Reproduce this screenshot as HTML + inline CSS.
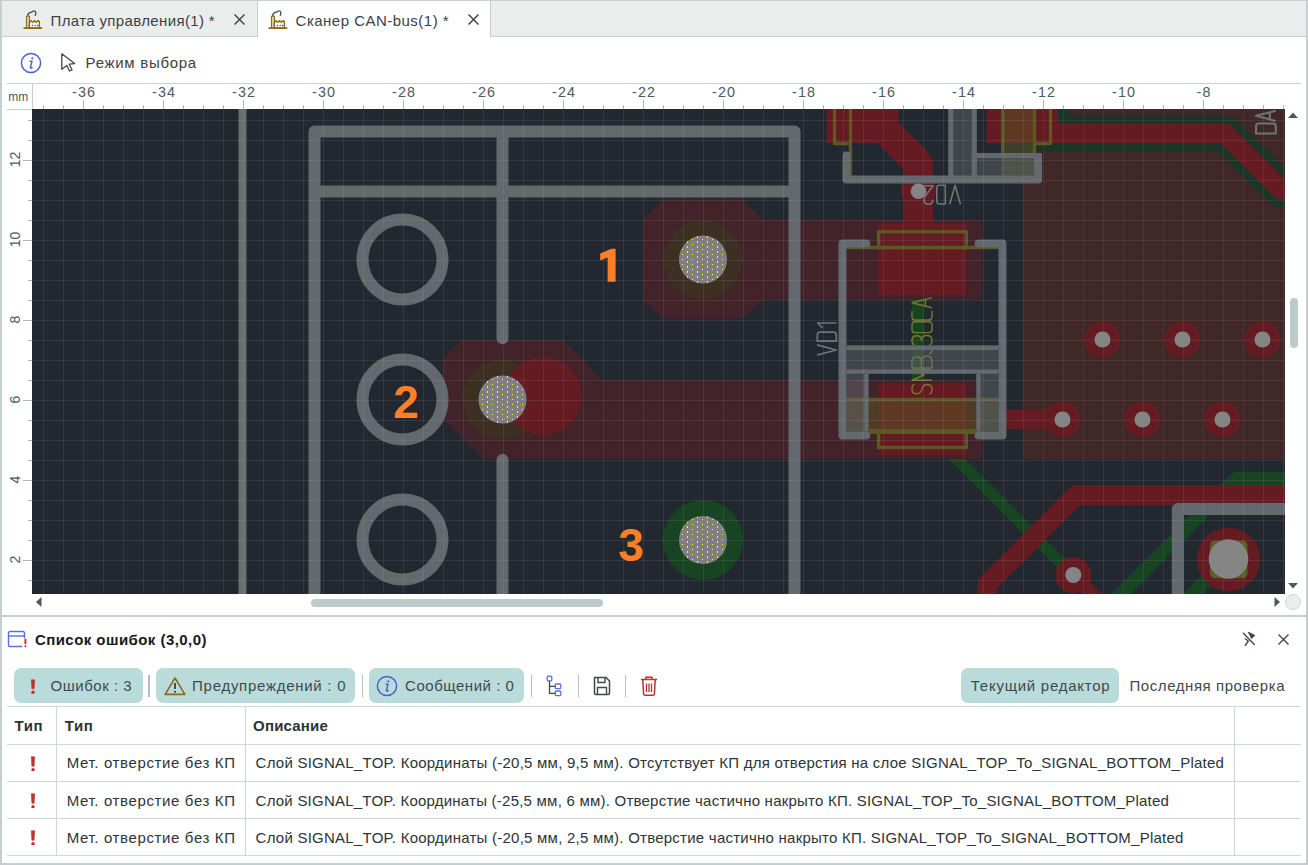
<!DOCTYPE html>
<html><head><meta charset="utf-8">
<style>
*{box-sizing:border-box;margin:0;padding:0}
html,body{width:1308px;height:865px;overflow:hidden;background:#c4cfcf;font-family:"Liberation Sans",sans-serif;color:#343c3e}
svg{display:block}
.abs{position:absolute}
.t{position:absolute;white-space:nowrap;line-height:1}
</style></head><body>
<div class="abs" style="left:2px;top:1px;width:1304px;height:35px;background:#ebeded"></div>
<div class="abs" style="left:2px;top:36px;width:1304px;height:1px;background:#c4cfcf"></div>
<div class="abs" style="left:257px;top:1px;width:1px;height:36px;background:#c4cfcf"></div>
<div class="abs" style="left:258px;top:1px;width:232px;height:36px;background:#fff"></div>
<div class="abs" style="left:490px;top:1px;width:1px;height:36px;background:#c4cfcf"></div>
<div class="abs" style="left:2px;top:37px;width:1304px;height:578px;background:#fff"></div>
<div class="abs" style="left:2px;top:617px;width:1304px;height:246px;background:#fff"></div>
<svg class="abs" style="left:23px;top:10px" width="20" height="20" viewBox="0 0 20 20"><path d="M3.6,18 V6.8 Q3.6,6 4.4,6 H5.5 Q6.3,6 6.3,6.8 V18" stroke="#8e6a14" stroke-width="1.4" fill="#fff"/><path d="M6.3,18 V12.8 L8.2,10.6 L9.8,12.4 L11.7,10.6 L13.3,12.4 L15.2,10.6 L16.4,11.6 V18 Z" stroke="#8e6a14" stroke-width="1.4" fill="#fff" stroke-linejoin="round"/><path d="M1.2,18.2 H18.6" stroke="#8e6a14" stroke-width="1.7" stroke-linecap="round"/><circle cx="9.4" cy="15.4" r="0.75" fill="#3c4a4a"/><circle cx="12.1" cy="15.4" r="0.75" fill="#3c4a4a"/><circle cx="14.7" cy="15.4" r="0.75" fill="#3c4a4a"/><path d="M4.7,4.9 Q6.2,1.9 8.8,2.1 Q10,0.4 11.8,1 Q13.6,1.9 12.3,5.3" stroke="#3c4a4a" stroke-width="1.3" fill="none" stroke-linecap="round"/></svg>
<svg class="abs" style="left:268px;top:10px" width="20" height="20" viewBox="0 0 20 20"><path d="M3.6,18 V6.8 Q3.6,6 4.4,6 H5.5 Q6.3,6 6.3,6.8 V18" stroke="#8e6a14" stroke-width="1.4" fill="#fff"/><path d="M6.3,18 V12.8 L8.2,10.6 L9.8,12.4 L11.7,10.6 L13.3,12.4 L15.2,10.6 L16.4,11.6 V18 Z" stroke="#8e6a14" stroke-width="1.4" fill="#fff" stroke-linejoin="round"/><path d="M1.2,18.2 H18.6" stroke="#8e6a14" stroke-width="1.7" stroke-linecap="round"/><circle cx="9.4" cy="15.4" r="0.75" fill="#3c4a4a"/><circle cx="12.1" cy="15.4" r="0.75" fill="#3c4a4a"/><circle cx="14.7" cy="15.4" r="0.75" fill="#3c4a4a"/><path d="M4.7,4.9 Q6.2,1.9 8.8,2.1 Q10,0.4 11.8,1 Q13.6,1.9 12.3,5.3" stroke="#3c4a4a" stroke-width="1.3" fill="none" stroke-linecap="round"/></svg>
<svg class="abs" style="left:234px;top:14px" width="11" height="11" viewBox="0 0 11 11"><path d="M0.5,0.5 L10.5,10.5 M10.5,0.5 L0.5,10.5" stroke="#3c4a4a" stroke-width="1.5"/></svg>
<svg class="abs" style="left:468px;top:14px" width="11" height="11" viewBox="0 0 11 11"><path d="M0.5,0.5 L10.5,10.5 M10.5,0.5 L0.5,10.5" stroke="#3c4a4a" stroke-width="1.5"/></svg>
<svg class="abs" style="left:20px;top:52px" width="22" height="22" viewBox="0 0 22 22"><circle cx="11" cy="11" r="9.6" stroke="#4a5fd0" stroke-width="1.5" fill="none"/><circle cx="12.3" cy="6.3" r="1.1" fill="#4a5fd0"/><path d="M9.6,9.3 H12 L10.4,15.3 Q10.2,16.2 11.2,16 L12.6,15.5" stroke="#4a5fd0" stroke-width="1.4" fill="none" stroke-linejoin="round"/></svg>
<svg class="abs" style="left:60px;top:52px" width="18" height="22" viewBox="0 0 18 22"><path d="M1.8,1.8 L14.6,11.6 L9.3,12.2 L12,17.8 L9.5,19 L6.9,13.4 L1.8,17.3 Z" stroke="#3c4a4a" stroke-width="1.3" fill="#fff" stroke-linejoin="round"/></svg>
<svg class="abs" style="left:0;top:0" width="1308" height="110" viewBox="0 0 1308 110">
<path d="M7,83.5 H1301 M7,109.5 H32 M32.5,83 V109" stroke="#c4cfcf" stroke-width="1"/>
<path d="M43.5,105V109M63.5,105V109M83.5,100V109M103.5,105V109M123.5,105V109M143.5,105V109M163.5,100V109M183.5,105V109M203.5,105V109M223.5,105V109M243.5,100V109M263.5,105V109M283.5,105V109M303.5,105V109M323.5,100V109M343.5,105V109M363.5,105V109M383.5,105V109M403.5,100V109M423.5,105V109M443.5,105V109M463.5,105V109M483.5,100V109M503.5,105V109M523.5,105V109M543.5,105V109M563.5,100V109M583.5,105V109M603.5,105V109M623.5,105V109M643.5,100V109M663.5,105V109M683.5,105V109M703.5,105V109M723.5,100V109M743.5,105V109M763.5,105V109M783.5,105V109M803.5,100V109M823.5,105V109M843.5,105V109M863.5,105V109M883.5,100V109M903.5,105V109M923.5,105V109M943.5,105V109M963.5,100V109M983.5,105V109M1003.5,105V109M1023.5,105V109M1043.5,100V109M1063.5,105V109M1083.5,105V109M1103.5,105V109M1123.5,100V109M1143.5,105V109M1163.5,105V109M1183.5,105V109M1203.5,100V109M1223.5,105V109M1243.5,105V109M1263.5,105V109M1283.5,105V109" stroke="#a9b8b8" stroke-width="1"/>
<text x="84.0" y="97" text-anchor="middle" font-family="Liberation Sans" font-size="14.3" letter-spacing="1.1" fill="#4b5a5e">-36</text>
<text x="164.0" y="97" text-anchor="middle" font-family="Liberation Sans" font-size="14.3" letter-spacing="1.1" fill="#4b5a5e">-34</text>
<text x="244.0" y="97" text-anchor="middle" font-family="Liberation Sans" font-size="14.3" letter-spacing="1.1" fill="#4b5a5e">-32</text>
<text x="324.0" y="97" text-anchor="middle" font-family="Liberation Sans" font-size="14.3" letter-spacing="1.1" fill="#4b5a5e">-30</text>
<text x="404.0" y="97" text-anchor="middle" font-family="Liberation Sans" font-size="14.3" letter-spacing="1.1" fill="#4b5a5e">-28</text>
<text x="484.0" y="97" text-anchor="middle" font-family="Liberation Sans" font-size="14.3" letter-spacing="1.1" fill="#4b5a5e">-26</text>
<text x="564.0" y="97" text-anchor="middle" font-family="Liberation Sans" font-size="14.3" letter-spacing="1.1" fill="#4b5a5e">-24</text>
<text x="644.0" y="97" text-anchor="middle" font-family="Liberation Sans" font-size="14.3" letter-spacing="1.1" fill="#4b5a5e">-22</text>
<text x="724.0" y="97" text-anchor="middle" font-family="Liberation Sans" font-size="14.3" letter-spacing="1.1" fill="#4b5a5e">-20</text>
<text x="804.0" y="97" text-anchor="middle" font-family="Liberation Sans" font-size="14.3" letter-spacing="1.1" fill="#4b5a5e">-18</text>
<text x="884.0" y="97" text-anchor="middle" font-family="Liberation Sans" font-size="14.3" letter-spacing="1.1" fill="#4b5a5e">-16</text>
<text x="964.0" y="97" text-anchor="middle" font-family="Liberation Sans" font-size="14.3" letter-spacing="1.1" fill="#4b5a5e">-14</text>
<text x="1044.0" y="97" text-anchor="middle" font-family="Liberation Sans" font-size="14.3" letter-spacing="1.1" fill="#4b5a5e">-12</text>
<text x="1124.0" y="97" text-anchor="middle" font-family="Liberation Sans" font-size="14.3" letter-spacing="1.1" fill="#4b5a5e">-10</text>
<text x="1204.0" y="97" text-anchor="middle" font-family="Liberation Sans" font-size="14.3" letter-spacing="1.1" fill="#4b5a5e">-8</text>
</svg>
<svg class="abs" style="left:0;top:109px" width="32" height="485" viewBox="0 109 32 485">
<path d="M28,120.5H32M28,140.5H32M23,160.5H32M28,180.5H32M28,200.5H32M28,220.5H32M23,240.5H32M28,260.5H32M28,280.5H32M28,300.5H32M23,320.5H32M28,340.5H32M28,360.5H32M28,380.5H32M23,400.5H32M28,420.5H32M28,440.5H32M28,460.5H32M23,480.5H32M28,500.5H32M28,520.5H32M28,540.5H32M23,560.5H32M28,580.5H32" stroke="#a9b8b8" stroke-width="1"/>
<text transform="translate(20.3,159.5) rotate(-90)" x="0" y="0" text-anchor="middle" font-family="Liberation Sans" font-size="14" fill="#4b5a5e">12</text>
<text transform="translate(20.3,239.5) rotate(-90)" x="0" y="0" text-anchor="middle" font-family="Liberation Sans" font-size="14" fill="#4b5a5e">10</text>
<text transform="translate(20.3,319.5) rotate(-90)" x="0" y="0" text-anchor="middle" font-family="Liberation Sans" font-size="14" fill="#4b5a5e">8</text>
<text transform="translate(20.3,399.5) rotate(-90)" x="0" y="0" text-anchor="middle" font-family="Liberation Sans" font-size="14" fill="#4b5a5e">6</text>
<text transform="translate(20.3,479.5) rotate(-90)" x="0" y="0" text-anchor="middle" font-family="Liberation Sans" font-size="14" fill="#4b5a5e">4</text>
<text transform="translate(20.3,559.5) rotate(-90)" x="0" y="0" text-anchor="middle" font-family="Liberation Sans" font-size="14" fill="#4b5a5e">2</text>
</svg>
<div class="abs" style="left:1288px;top:112px;width:10px;height:6px"><svg width="10" height="6" viewBox="0 0 10 6"><path d="M0,6 L5,0.5 L10,6 Z" fill="#4e5a5a"/></svg></div>
<div class="abs" style="left:1287.5px;top:583px;width:10px;height:6px"><svg width="10" height="6" viewBox="0 0 10 6"><path d="M0,0 L5,5.5 L10,0 Z" fill="#4e5a5a"/></svg></div>
<div class="abs" style="left:1290px;top:298px;width:8px;height:50px;border-radius:4px;background:#bccaca"></div>
<div class="abs" style="left:311px;top:599px;width:292px;height:8px;border-radius:4px;background:#bccaca"></div>
<div class="abs" style="left:36px;top:597px;width:6px;height:10px"><svg width="6" height="10" viewBox="0 0 6 10"><path d="M5.5,0 L0,5 L5.5,10 Z" fill="#4e5a5a"/></svg></div>
<div class="abs" style="left:1274px;top:597px;width:6px;height:10px"><svg width="6" height="10" viewBox="0 0 6 10"><path d="M0.5,0 L6,5 L0.5,10 Z" fill="#4e5a5a"/></svg></div>
<div class="abs" style="left:1285px;top:594px;width:16px;height:16px;border-radius:50%;background:#eaeded;border:1px solid #cfd8d8"></div>
<svg class="abs" style="left:7px;top:630px" width="22" height="18" viewBox="0 0 22 18"><path d="M17.5,8 V3 Q17.5,1.5 16,1.5 H3 Q1.5,1.5 1.5,3 V15 Q1.5,16.5 3,16.5 H15" stroke="#5b6ee0" stroke-width="1.4" fill="none"/><path d="M1.5,6 H17.5" stroke="#5b6ee0" stroke-width="1.4"/><path d="M18.4,8.6 V14.2" stroke="#c0302f" stroke-width="1.9"/><circle cx="18.4" cy="16.3" r="1.05" fill="#c0302f"/></svg>
<svg class="abs" style="left:1241px;top:631px" width="17" height="17" viewBox="0 0 17 17"><path d="M7.4,1.2 L13.8,4.5 L10.6,7.4 Z" fill="#3c4a4a" stroke="#3c4a4a" stroke-width="1" stroke-linejoin="round"/><path d="M2.4,2.2 L13.3,13.5" stroke="#3c4a4a" stroke-width="1.4" stroke-linecap="round"/><path d="M4.3,7.8 L7.5,10.2 M7.2,10.2 L4.3,14.5" stroke="#3c4a4a" stroke-width="1.4" stroke-linecap="round"/></svg>
<svg class="abs" style="left:1278px;top:634px" width="11" height="11" viewBox="0 0 11 11"><path d="M0.5,0.5 L10.5,10.5 M10.5,0.5 L0.5,10.5" stroke="#3c4a4a" stroke-width="1.4"/></svg>
<div class="abs" style="left:14px;top:668px;width:128.5px;height:34.5px;border-radius:7px;background:#b9dcdb"></div>
<div class="abs" style="left:155.5px;top:668px;width:199.5px;height:34.5px;border-radius:7px;background:#b9dcdb"></div>
<div class="abs" style="left:369px;top:668px;width:155px;height:34.5px;border-radius:7px;background:#b9dcdb"></div>
<div class="abs" style="left:961px;top:668px;width:158px;height:34.5px;border-radius:7px;background:#b9dcdb"></div>
<div class="abs" style="left:148px;top:674.5px;width:1.6px;height:22px;background:#b4c0c0"></div>
<div class="abs" style="left:361.5px;top:674.5px;width:1.6px;height:22px;background:#b4c0c0"></div>
<div class="abs" style="left:530.5px;top:674.5px;width:1.6px;height:22px;background:#b4c0c0"></div>
<div class="abs" style="left:577.5px;top:674.5px;width:1.6px;height:22px;background:#b4c0c0"></div>
<div class="abs" style="left:624.5px;top:674.5px;width:1.6px;height:22px;background:#b4c0c0"></div>
<svg class="abs" style="left:30.2px;top:678.5px" width="6" height="15" viewBox="0 0 6 15"><path d="M1.3,0.8 H4.7 L4.1,9.8 H1.9 Z" fill="#c0302f" stroke="#c0302f" stroke-width="0.6" stroke-linejoin="round"/><circle cx="3" cy="13.2" r="1.7" fill="#c0302f"/></svg>
<svg class="abs" style="left:163px;top:676px" width="24" height="20" viewBox="0 0 24 20"><path d="M12,2 L21.9,18.4 H2.1 Z" stroke="#8c6a1a" stroke-width="1.6" fill="none" stroke-linejoin="round"/><path d="M12,7 V13" stroke="#2b3436" stroke-width="1.7"/><circle cx="12" cy="15.8" r="1" fill="#2b3436"/></svg>
<svg class="abs" style="left:376px;top:675px" width="22" height="22" viewBox="0 0 22 22"><circle cx="11" cy="11" r="9.6" stroke="#4a5fd0" stroke-width="1.5" fill="none"/><circle cx="12.3" cy="6.3" r="1.1" fill="#4a5fd0"/><path d="M9.6,9.3 H12 L10.4,15.3 Q10.2,16.2 11.2,16 L12.6,15.5" stroke="#4a5fd0" stroke-width="1.4" fill="none" stroke-linejoin="round"/></svg>
<svg class="abs" style="left:546px;top:675px" width="20" height="22" viewBox="0 0 20 22"><rect x="1.2" y="1.2" width="4.6" height="4.6" rx="1" stroke="#5b6ee0" stroke-width="1.3" fill="none"/><rect x="9.2" y="9" width="5.6" height="4.6" rx="1" stroke="#5b6ee0" stroke-width="1.3" fill="none"/><rect x="9.2" y="16" width="5.6" height="4.6" rx="1" stroke="#5b6ee0" stroke-width="1.3" fill="none"/><path d="M3.5,6 V18.3 H9.2 M3.5,11.3 H9.2" stroke="#3c4a4a" stroke-width="1.3" fill="none"/></svg>
<svg class="abs" style="left:592px;top:675px" width="20" height="22" viewBox="0 0 20 22"><path d="M2.5,2.5 H14 L17.5,6 V18 Q17.5,19.5 16,19.5 H4 Q2.5,19.5 2.5,18 Z" stroke="#3c4a4a" stroke-width="1.5" fill="none" stroke-linejoin="round"/><path d="M6,2.8 V7.5 H13 V2.8 M5.5,19.2 V12.5 H14.5 V19.2" stroke="#3c4a4a" stroke-width="1.4" fill="none"/></svg>
<svg class="abs" style="left:639px;top:675px" width="20" height="22" viewBox="0 0 20 22"><path d="M2,4.5 H18 M7,4.3 V2.3 H13 V4.3" stroke="#c0302f" stroke-width="1.5" fill="none"/><path d="M3.8,5 L4.6,19 Q4.7,20.3 6,20.3 H14 Q15.3,20.3 15.4,19 L16.2,5" stroke="#c0302f" stroke-width="1.5" fill="none"/><path d="M7.5,8.5 V17 M10,8.5 V17 M12.5,8.5 V17" stroke="#c0302f" stroke-width="1.3"/></svg>
<svg class="abs" style="left:0;top:700px" width="1308" height="160" viewBox="0 700 1308 160"><path d="M7,706.5 H1301 M7,744.5 H1301 M7,781.5 H1301 M7,818.5 H1301 M7,855.5 H1301 M56.5,706 V856 M245.5,706 V856 M1234.5,706 V856" stroke="#cfd9d9" stroke-width="1.2"/></svg>
<svg class="abs" style="left:29.5px;top:755.5px" width="6" height="15.5" viewBox="0 0 6 15.5"><path d="M1.3,0.8 H4.7 L4.1,10.3 H1.9 Z" fill="#c0302f" stroke="#c0302f" stroke-width="0.6" stroke-linejoin="round"/><circle cx="3" cy="13.7" r="1.7" fill="#c0302f"/></svg>
<svg class="abs" style="left:29.5px;top:792.8px" width="6" height="15.5" viewBox="0 0 6 15.5"><path d="M1.3,0.8 H4.7 L4.1,10.3 H1.9 Z" fill="#c0302f" stroke="#c0302f" stroke-width="0.6" stroke-linejoin="round"/><circle cx="3" cy="13.7" r="1.7" fill="#c0302f"/></svg>
<svg class="abs" style="left:29.5px;top:829.8px" width="6" height="15.5" viewBox="0 0 6 15.5"><path d="M1.3,0.8 H4.7 L4.1,10.3 H1.9 Z" fill="#c0302f" stroke="#c0302f" stroke-width="0.6" stroke-linejoin="round"/><circle cx="3" cy="13.7" r="1.7" fill="#c0302f"/></svg>
<svg class="abs" style="left:32px;top:109px" width="1253" height="485" viewBox="32 109 1253 485">
<defs><pattern id="dots" x="0" y="0" width="10" height="5" patternUnits="userSpaceOnUse"><rect x="7" y="1" width="1" height="2" fill="#ffff00"/><rect x="2" y="4" width="1" height="1" fill="#ffff00"/></pattern></defs>
<rect x="32" y="109" width="1253" height="485" fill="#22282f"/>
<path d="M1023,100 H1290 V459 H1027 Q1023,459 1023,455 Z" fill="#412828"/>
<path d="M1023,133.5 H1225 L1281,189.5 H1300" stroke="#1b3528" stroke-width="36" fill="none" stroke-linejoin="round"/>
<rect x="1056" y="100" width="20" height="24" fill="#1b3528"/>
<path d="M1067.5,100 H1290 V115 H1075 Q1067.5,115 1067.5,107.5 Z" fill="#412828"/>
<path d="M918,295.5 V420 L1073,575" stroke="#174422" stroke-width="12" fill="none" stroke-linejoin="round"/>
<path d="M1300,479 H1236 L1110,605" stroke="#174422" stroke-width="14" fill="none" stroke-linejoin="round"/>
<path d="M1225,562 L1180,607" stroke="#174422" stroke-width="14" fill="none"/>
<polygon points="663,199.4 742.7,199.4 763,219.8 763,300 742.7,318.7 663,318.7 643,300 643,219.8" fill="#422329"/>
<path d="M703,219.8 H978 Q982,219.8 982,223.8 V296 Q982,300 978,300 H703 Z" fill="#422329"/>
<path d="M461.5,340 H563.6 L602,380 H978 Q982,380 982,384 V455 Q982,459 978,459 H483.5 L443,419 V358 Z" fill="#422329"/>
<circle cx="703" cy="259.5" r="39.6" fill="#3d3022"/>
<circle cx="502.5" cy="399.5" r="39.6" fill="#3d3022"/>
<circle cx="703" cy="540" r="40" fill="#174422"/>
<circle cx="543" cy="396" r="39" fill="#641b21"/>
<path d="M826.5,100 H898.6 V122.6 L926,150 Q933,157 933,165 V224 H904 V170 L878,143.4 H826.5 Z" fill="#641b21"/>
<circle cx="918.5" cy="191" r="17.5" fill="#641b21"/>
<rect x="878.5" y="223.5" width="88.2" height="71.9" fill="#641b21"/>
<rect x="878.6" y="383.3" width="87.9" height="71.6" fill="#641b21"/>
<rect x="986.5" y="100" width="71.5" height="43.4" fill="#641b21"/>
<path d="M1050,133.5 H1225 L1281,189.5 H1300" stroke="#641b21" stroke-width="20" fill="none" stroke-linejoin="round"/>
<rect x="1000" y="409.4" width="62" height="19.9" fill="#641b21"/>
<path d="M1300,495.3 H1076 L987.5,583.8 V610" stroke="#641b21" stroke-width="20" fill="none" stroke-linejoin="round"/>
<path d="M1073,575 L1105,607" stroke="#641b21" stroke-width="14" fill="none"/>
<circle cx="1102.5" cy="339.5" r="18" fill="#641b21"/>
<circle cx="1182.5" cy="339.5" r="18" fill="#641b21"/>
<circle cx="1262.5" cy="339.5" r="18" fill="#641b21"/>
<circle cx="1062.5" cy="419.5" r="18" fill="#641b21"/>
<circle cx="1142.5" cy="419.5" r="18" fill="#641b21"/>
<circle cx="1222.5" cy="419.5" r="18" fill="#641b21"/>
<circle cx="1073.3" cy="575" r="18" fill="#641b21"/>
<circle cx="1228.6" cy="559.5" r="31.7" fill="#641b21"/>
<rect x="846.5" y="399.5" width="152" height="32" fill="rgba(89,85,38,0.5)"/>
<rect x="1023" y="153" width="17" height="24" fill="#22282f"/>
<rect x="1001" y="100" width="35" height="76" fill="rgba(89,85,38,0.5)"/>
<rect x="1210" y="540.8" width="37.5" height="37.5" rx="4.5" fill="#5d5e25"/>
<path d="M834.5,100 V143.5 H850.5 V100 M850.5,143.5 V175" stroke="#5a5924" stroke-width="3.3" fill="none" stroke-linejoin="round"/>
<path d="M1034.5,100 V153 M1034.5,143.5 H1050.5 V100" stroke="#5a5924" stroke-width="3.3" fill="none" stroke-linejoin="round"/>
<path d="M1002.7,100 V153" stroke="#5a5924" stroke-width="3.3" fill="none"/>
<rect x="878.6" y="231.8" width="87.8" height="15.8" stroke="#5a5924" stroke-width="3.3" fill="none"/>
<path d="M846,247.5 H999" stroke="#5a5924" stroke-width="3.3"/>
<path d="M846,399.5 H999" stroke="#5a5924" stroke-width="3.5"/>
<path d="M868.6,431.5 H976.3" stroke="#5a5924" stroke-width="5"/>
<rect x="878.6" y="431" width="87.7" height="16.5" stroke="#5a5924" stroke-width="3.3" fill="none"/>
<path transform="translate(912,394) rotate(-90)" d="M9.6,2.6 Q9,0 4.8,0 Q0.3,0 0.3,4.8 Q0.3,9 4.8,10 Q9.6,11 9.6,15.2 Q9.6,20 4.8,20 Q0.6,20 0,17.2 M13.8,20 V0 L19,12 L24.2,0 V20 M26,20 V0 H32.5 Q37,0 37,4.8 Q37,9.4 32.5,9.4 H26 M32.5,9.4 Q38,9.4 38,14.6 Q38,20 32.5,20 H26 M47,0 V16.5 Q47,20 43.5,20 Q40.5,20 40.3,17 M49,2.5 Q49.8,0 53.6,0 Q58.3,0 58.3,4.8 Q58.3,9.4 53.4,9.4 Q58.6,9.4 58.6,14.7 Q58.6,20 53.6,20 Q49.6,20 49,17.3 M64.4,0 H69.2 Q72.2,0 72.2,3 V17 Q72.2,20 69.2,20 H64.4 Q61.4,20 61.4,17 V3 Q61.4,0 64.4,0 Z M83,0 H77.3 Q74.1,0 74.1,3.2 V16.8 Q74.1,20 77.3,20 H83 M86.2,20 L91.3,0 L96.4,20 M87.9,13.5 H94.7" stroke="#77762f" stroke-width="1.45" fill="none" stroke-linejoin="round"/>
<path d="M314.5,620 V131.5 H794.5 V620 M314.5,191.5 H794.5 M502.5,131.5 V338.3 M502.5,459.7 V620" stroke="#64686f" stroke-width="12" fill="none" stroke-linejoin="round" stroke-linecap="round"/>
<circle cx="402.5" cy="259.5" r="40" stroke="#64686f" stroke-width="12" fill="none"/>
<circle cx="402.5" cy="399.5" r="40" stroke="#64686f" stroke-width="12" fill="none"/>
<circle cx="402.5" cy="539.5" r="40" stroke="#64686f" stroke-width="12" fill="none"/>
<path d="M242.5,100 V620" stroke="#6a6d71" stroke-width="8"/>
<rect x="950.7" y="90" width="23.6" height="89.5" fill="rgba(103,107,114,0.46)" stroke="#64686f" stroke-width="5"/>
<rect x="974.3" y="155.5" width="65" height="24" fill="rgba(103,107,114,0.46)" stroke="#64686f" stroke-width="5"/>
<path d="M846.5,155.5 V179.5 H1038 V157" stroke="#64686f" stroke-width="8" fill="none" stroke-linejoin="round" stroke-linecap="round"/>
<rect x="846.5" y="345.5" width="152.1" height="28.3" fill="rgba(103,107,114,0.46)"/>
<path d="M846.5,347.7 H998.6 M846.5,371.6 H998.6" stroke="#64686f" stroke-width="4.4"/>
<rect x="846.5" y="373.8" width="19.9" height="57.8" fill="rgba(103,107,114,0.46)"/>
<rect x="978.4" y="373.8" width="20.2" height="57.8" fill="rgba(103,107,114,0.46)"/>
<path d="M866.4,373.8 V431.6 M978.4,373.8 V431.6" stroke="#64686f" stroke-width="4.3"/>
<path d="M866.2,243.5 H842.5 V435.6 H866.2 M978.6,243.5 H1002.5 V435.6 H978.6" stroke="#64686f" stroke-width="8" fill="none" stroke-linejoin="round" stroke-linecap="round"/>
<path d="M1177.8,620 V509 H1300" stroke="#64686f" stroke-width="12" fill="none" stroke-linejoin="round"/>
<path transform="translate(960.5,204.3) rotate(180)" d="M0.1,0 L5.4,19.1 L10.8,0 M15.2,0.3 H21.2 Q23.7,0.3 23.7,3.3 V16 Q23.7,19 21.2,19 H15.2 Z M27.6,4.6 Q27.6,0 32,0 Q36.4,0 36.4,4.5 Q36.4,6.5 34.8,8.8 L27.3,18.5 H36.5" stroke="#6f737a" stroke-width="1.6" fill="none" stroke-linejoin="round"/>
<path transform="translate(817,355) rotate(-90)" d="M0,0 L5.05,19.4 L10.1,0 M13.8,0.3 V19.3 H19.8 Q22.8,19.3 22.8,16.3 V3.3 Q22.8,0.3 19.8,0.3 Z M32,0 V19.5 M32,0.5 L27.2,5.6" stroke="#6f737a" stroke-width="1.7" fill="none" stroke-linejoin="round"/>
<path transform="translate(1256,134) rotate(-90)" d="M0.5,0 H7.5 Q10.5,0 10.5,3 V16.8 Q10.5,19.8 7.5,19.8 H0.5 Z M13,19.8 L18.2,0 L23.2,19.8 M15,13.8 H21.3" stroke="#6f737a" stroke-width="2.1" fill="none" stroke-linejoin="round"/>
<clipPath id="cpour"><rect x="1023" y="109" width="262" height="350"/></clipPath>
<clipPath id="crest"><path clip-rule="evenodd" d="M32,109 H1285 V594 H32 Z M1023,109 H1285 V459 H1023 Z"/></clipPath>
<path clip-path="url(#crest)" d="M43.5,109V594M63.5,109V594M83.5,109V594M103.5,109V594M123.5,109V594M143.5,109V594M163.5,109V594M183.5,109V594M203.5,109V594M223.5,109V594M243.5,109V594M263.5,109V594M283.5,109V594M303.5,109V594M323.5,109V594M343.5,109V594M363.5,109V594M383.5,109V594M403.5,109V594M423.5,109V594M443.5,109V594M463.5,109V594M483.5,109V594M503.5,109V594M523.5,109V594M543.5,109V594M563.5,109V594M583.5,109V594M603.5,109V594M623.5,109V594M643.5,109V594M663.5,109V594M683.5,109V594M703.5,109V594M723.5,109V594M743.5,109V594M763.5,109V594M783.5,109V594M803.5,109V594M823.5,109V594M843.5,109V594M863.5,109V594M883.5,109V594M903.5,109V594M923.5,109V594M943.5,109V594M963.5,109V594M983.5,109V594M1003.5,109V594M1023.5,109V594M1043.5,109V594M1063.5,109V594M1083.5,109V594M1103.5,109V594M1123.5,109V594M1143.5,109V594M1163.5,109V594M1183.5,109V594M1203.5,109V594M1223.5,109V594M1243.5,109V594M1263.5,109V594M1283.5,109V594M32,120.5H1285M32,140.5H1285M32,160.5H1285M32,180.5H1285M32,200.5H1285M32,220.5H1285M32,240.5H1285M32,260.5H1285M32,280.5H1285M32,300.5H1285M32,320.5H1285M32,340.5H1285M32,360.5H1285M32,380.5H1285M32,400.5H1285M32,420.5H1285M32,440.5H1285M32,460.5H1285M32,480.5H1285M32,500.5H1285M32,520.5H1285M32,540.5H1285M32,560.5H1285M32,580.5H1285" stroke="rgba(215,195,230,0.10)" stroke-width="1"/>
<path clip-path="url(#cpour)" d="M43.5,109V594M63.5,109V594M83.5,109V594M103.5,109V594M123.5,109V594M143.5,109V594M163.5,109V594M183.5,109V594M203.5,109V594M223.5,109V594M243.5,109V594M263.5,109V594M283.5,109V594M303.5,109V594M323.5,109V594M343.5,109V594M363.5,109V594M383.5,109V594M403.5,109V594M423.5,109V594M443.5,109V594M463.5,109V594M483.5,109V594M503.5,109V594M523.5,109V594M543.5,109V594M563.5,109V594M583.5,109V594M603.5,109V594M623.5,109V594M643.5,109V594M663.5,109V594M683.5,109V594M703.5,109V594M723.5,109V594M743.5,109V594M763.5,109V594M783.5,109V594M803.5,109V594M823.5,109V594M843.5,109V594M863.5,109V594M883.5,109V594M903.5,109V594M923.5,109V594M943.5,109V594M963.5,109V594M983.5,109V594M1003.5,109V594M1023.5,109V594M1043.5,109V594M1063.5,109V594M1083.5,109V594M1103.5,109V594M1123.5,109V594M1143.5,109V594M1163.5,109V594M1183.5,109V594M1203.5,109V594M1223.5,109V594M1243.5,109V594M1263.5,109V594M1283.5,109V594M32,120.5H1285M32,140.5H1285M32,160.5H1285M32,180.5H1285M32,200.5H1285M32,220.5H1285M32,240.5H1285M32,260.5H1285M32,280.5H1285M32,300.5H1285M32,320.5H1285M32,340.5H1285M32,360.5H1285M32,380.5H1285M32,400.5H1285M32,420.5H1285M32,440.5H1285M32,460.5H1285M32,480.5H1285M32,500.5H1285M32,520.5H1285M32,540.5H1285M32,560.5H1285M32,580.5H1285" stroke="rgba(235,195,165,0.085)" stroke-width="1"/>
<circle cx="703" cy="259.5" r="24" fill="#808080"/><circle cx="703" cy="259.5" r="24" fill="url(#dots)"/>
<circle cx="502.5" cy="399.5" r="24" fill="#808080"/><circle cx="502.5" cy="399.5" r="24" fill="url(#dots)"/>
<circle cx="703" cy="540" r="24" fill="#808080"/><circle cx="703" cy="540" r="24" fill="url(#dots)"/>
<circle cx="1102.5" cy="339.5" r="8" fill="#858585"/>
<circle cx="1182.5" cy="339.5" r="8" fill="#858585"/>
<circle cx="1262.5" cy="339.5" r="8" fill="#858585"/>
<circle cx="1062.5" cy="419.5" r="8" fill="#858585"/>
<circle cx="1142.5" cy="419.5" r="8" fill="#858585"/>
<circle cx="1222.5" cy="419.5" r="8" fill="#858585"/>
<circle cx="1073.3" cy="575" r="8" fill="#858585"/>
<circle cx="1228.5" cy="559" r="19.8" fill="#858585"/>
<circle cx="918.5" cy="191.2" r="7.8" fill="#858585"/>
<path d="M600.2,253.4 L611.2,248.8 H615.6 V281.8 H607.6 V257.6 L600.2,260.6 Z" fill="#ff7f27"/>
<text x="406" y="418" font-family="Liberation Sans" font-weight="bold" font-size="46" fill="#ff7f27" text-anchor="middle">2</text>
<text x="631" y="561" font-family="Liberation Sans" font-weight="bold" font-size="46" fill="#ff7f27" text-anchor="middle">3</text>
</svg>
<div class="t" style="left:50.6px;top:13.3px;font-size:15px;font-weight:400;color:#3a4244;letter-spacing:0.359px">Плата управления(1) *</div>
<div class="t" style="left:295.6px;top:13.3px;font-size:15px;font-weight:400;color:#3a4244;letter-spacing:0.478px">Сканер CAN-bus(1) *</div>
<div class="t" style="left:85.6px;top:55.3px;font-size:15px;font-weight:400;color:#3a4244;letter-spacing:0.711px">Режим выбора</div>
<div class="t" style="left:34.9px;top:632.2px;font-size:15px;font-weight:700;color:#151a1b;letter-spacing:0.448px">Список ошибок (3,0,0)</div>
<div class="t" style="left:50.6px;top:678.0px;font-size:15px;font-weight:400;color:#3d4a4c;letter-spacing:0.509px">Ошибок : 3</div>
<div class="t" style="left:192.1px;top:678.0px;font-size:15px;font-weight:400;color:#3d4a4c;letter-spacing:0.727px">Предупреждений : 0</div>
<div class="t" style="left:405.1px;top:678.0px;font-size:15px;font-weight:400;color:#3d4a4c;letter-spacing:0.524px">Сообщений : 0</div>
<div class="t" style="left:970.8px;top:678.1px;font-size:15px;font-weight:400;color:#3d4a4c;letter-spacing:0.738px">Текущий редактор</div>
<div class="t" style="left:1129.5px;top:678.1px;font-size:15px;font-weight:400;color:#3d4a4c;letter-spacing:0.566px">Последняя проверка</div>
<div class="t" style="left:14.5px;top:717.7px;font-size:15px;font-weight:700;color:#2b3436;letter-spacing:0.613px">Тип</div>
<div class="t" style="left:64.8px;top:717.7px;font-size:15px;font-weight:700;color:#2b3436;letter-spacing:0.613px">Тип</div>
<div class="t" style="left:253.1px;top:717.7px;font-size:15px;font-weight:700;color:#2b3436;letter-spacing:0.192px">Описание</div>
<div class="t" style="left:66.7px;top:755.2px;font-size:15px;font-weight:400;color:#2b3436;letter-spacing:0.631px">Мет. отверстие без КП</div>
<div class="t" style="left:66.7px;top:792.6px;font-size:15px;font-weight:400;color:#2b3436;letter-spacing:0.631px">Мет. отверстие без КП</div>
<div class="t" style="left:66.7px;top:829.6px;font-size:15px;font-weight:400;color:#2b3436;letter-spacing:0.631px">Мет. отверстие без КП</div>
<div class="t" style="left:255.6px;top:755.2px;font-size:15px;font-weight:400;color:#2b3436;letter-spacing:0.242px">Слой SIGNAL_TOP. Координаты (-20,5 мм, 9,5 мм). Отсутствует КП для отверстия на слое SIGNAL_TOP_To_SIGNAL_BOTTOM_Plated</div>
<div class="t" style="left:255.6px;top:792.6px;font-size:15px;font-weight:400;color:#2b3436;letter-spacing:0.228px">Слой SIGNAL_TOP. Координаты (-25,5 мм, 6 мм). Отверстие частично накрыто КП. SIGNAL_TOP_To_SIGNAL_BOTTOM_Plated</div>
<div class="t" style="left:255.6px;top:829.6px;font-size:15px;font-weight:400;color:#2b3436;letter-spacing:0.242px">Слой SIGNAL_TOP. Координаты (-20,5 мм, 2,5 мм). Отверстие частично накрыто КП. SIGNAL_TOP_To_SIGNAL_BOTTOM_Plated</div>
<div class="t" style="left:8.3px;top:90.6px;font-size:12px;font-weight:400;color:#4b5a5e;letter-spacing:0.040px">mm</div>
</body></html>
